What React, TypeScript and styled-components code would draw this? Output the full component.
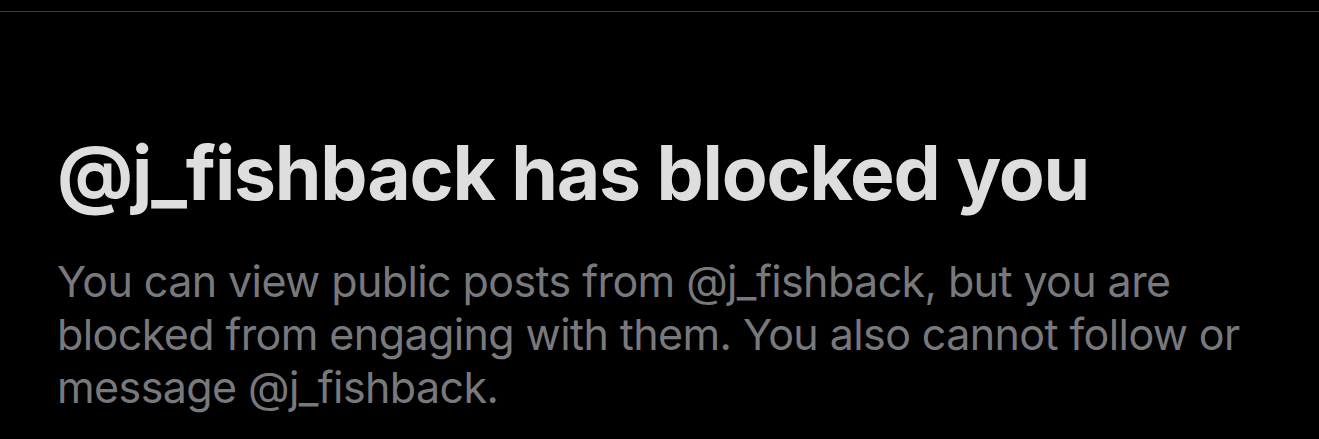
import React from "react";
import styled, { createGlobalStyle } from "styled-components";

const Global = createGlobalStyle`
  html, body { margin: 0; padding: 0; background: #000; }
  body { width: 1319px; height: 439px; overflow: hidden; }
`;

const Page = styled.div`
  width: 1319px;
  height: 439px;
  background: #000;
  box-sizing: border-box;
  padding-top: 11px;
  display: flex;
  flex-direction: column;
`;

const Divider = styled.div`
  height: 1px;
  background: #3b3b3d;
`;

const Content = styled.section`
  padding: 116px 40px 0 57px;
  display: flex;
  flex-direction: column;
  gap: 37px;
`;

const Title = styled.h1`
  margin: 0;
  font-family: Inter, "Liberation Sans", sans-serif;
  font-weight: 700;
  font-size: 75px;
  line-height: 90px;
  letter-spacing: -1.2px;
  color: #dedede;
  white-space: nowrap;
`;

const Body = styled.p`
  margin: 0;
  font-family: Inter, "Liberation Sans", sans-serif;
  font-weight: 400;
  font-size: 43px;
  line-height: 53px;
  letter-spacing: -0.6px;
  color: #78797d;
  max-width: 1215px;
`;

export default function App() {
  return (
    <>
      <Global />
      <Page>
        <Divider />
        <Content>
          <Title>@j_fishback has blocked you</Title>
          <Body>
            You can view public posts from @j_fishback, but you are blocked from engaging with them. You also cannot follow or message @j_fishback.
          </Body>
        </Content>
      </Page>
    </>
  );
}
